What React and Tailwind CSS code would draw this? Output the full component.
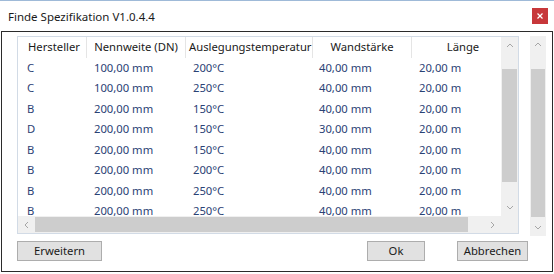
import React from "react";

const rows = [
  ["C", "100,00 mm", "200°C", "40,00 mm", "20,00 m"],
  ["C", "100,00 mm", "250°C", "40,00 mm", "20,00 m"],
  ["B", "200,00 mm", "150°C", "40,00 mm", "20,00 m"],
  ["D", "200,00 mm", "150°C", "30,00 mm", "20,00 m"],
  ["B", "200,00 mm", "150°C", "40,00 mm", "20,00 m"],
  ["B", "200,00 mm", "200°C", "40,00 mm", "20,00 m"],
  ["B", "200,00 mm", "250°C", "40,00 mm", "20,00 m"],
  ["B", "200,00 mm", "250°C", "40,00 mm", "20,00 m"],
];

const colW = ["w-[69px]", "w-[99px]", "w-[127px]", "w-[99px]", "w-[102px]"];
const cellPad = ["pl-[9px]", "pl-[7px]", "pl-[7px]", "pl-[6px]", "pl-[7px]"];

const Chevron = ({ dir }) => {
  const pts = {
    up: "1,5 4,2 7,5",
    down: "1,2 4,5 7,2",
    left: "5,1 2,4 5,7",
    right: "2,1 5,4 2,7",
  }[dir];
  const horiz = dir === "left" || dir === "right";
  return (
    <svg width={horiz ? 7 : 8} height={horiz ? 8 : 7} viewBox={horiz ? "0 0 7 8" : "0 0 8 7"} fill="none" stroke="#a6a6a6" strokeWidth="1">
      <polyline points={pts} />
    </svg>
  );
};

const VScroll = ({ thumbTop, thumbH, className }) => (
  <div className={`flex flex-col bg-[#f0f0f0] ${className}`}>
    <div className="h-[17px] flex items-center justify-center shrink-0"><Chevron dir="up" /></div>
    <div className="flex-1 flex flex-col">
      <div style={{ height: thumbTop }} />
      <div className="mx-[1px] bg-[#cdcdcd]" style={{ height: thumbH }} />
    </div>
    <div className="h-[17px] flex items-center justify-center shrink-0"><Chevron dir="down" /></div>
  </div>
);

export default function App() {
  return (
    <div className="w-[554px] h-[274px] bg-white overflow-hidden border-t border-[#9fbad8] text-[11.25px] text-[#1a1a1a]" style={{ fontFamily: '"Segoe UI", "Noto Sans", sans-serif' }}>
      <div className="h-[30px] flex items-center justify-between pl-[8px] pr-[6px]">
        <span className="mt-[1px] text-[11.5px]">Finde Spezifikation V1.0.4.4</span>
        <div className="w-[16px] h-[16px] bg-[#c7373a] flex items-center justify-center">
          <svg width="6" height="6" viewBox="0 0 6 6" stroke="white" strokeWidth="1.3">
            <line x1="0.5" y1="0.5" x2="5.5" y2="5.5" />
            <line x1="5.5" y1="0.5" x2="0.5" y2="5.5" />
          </svg>
        </div>
      </div>

      <div className="mx-[1px] h-[241px] border border-[#2b2b2b] flex flex-col">
        <div className="flex mt-[4px] pl-[15px]">
          <div className="w-[502px] h-[198px] border border-[#d2dbe6] flex flex-col">
            <div className="flex-1 flex min-h-0">
              <div className="flex-1 overflow-hidden flex flex-col">
                <div className="h-[21px] flex shrink-0">
                  {["Hersteller", "Nennweite (DN)", "Auslegungstemperatur", "Wandstärke", "Länge"].map((h, i) => (
                    <div key={h} className={`${colW[i]} shrink-0 h-full flex items-center overflow-hidden whitespace-nowrap ${i < 4 ? "border-r border-[#e5e5e5]" : ""} ${i === 2 ? "justify-start pl-[3px]" : "justify-center"} ${i === 0 ? "pl-[4px]" : ""}`}>
                      {h}
                    </div>
                  ))}
                </div>
                <div className="flex flex-col">
                  {rows.map((r, ri) => (
                    <div key={ri} className="h-[20.5px] flex shrink-0 text-[#2b4275]">
                      {r.map((c, ci) => (
                        <div key={ci} className={`${colW[ci]} ${cellPad[ci]} shrink-0 flex items-center whitespace-nowrap`}>{c}</div>
                      ))}
                    </div>
                  ))}
                </div>
              </div>
              <VScroll className="w-[17px]" thumbTop={15} thumbH={113} />
            </div>
            <div className="h-[17px] flex shrink-0">
              <div className="flex-1 bg-[#f0f0f0] flex items-center">
                <div className="w-[17px] flex justify-center"><Chevron dir="left" /></div>
                <div className="w-[433px] h-[15px] bg-[#cdcdcd]" />
                <div className="flex-1" />
                <div className="w-[17px] flex justify-center"><Chevron dir="right" /></div>
              </div>
              <div className="w-[17px] bg-[#f0f0f0]" />
            </div>
          </div>
          <VScroll className="w-[16px] h-[200px] ml-[11px]" thumbTop={16} thumbH={148} />
        </div>

        <div className="flex mt-[5px] pl-[15px]">
          <button className="w-[85px] h-[20px] bg-[#e1e1e1] border border-[#adadad] leading-none">Erweitern</button>
          <button className="w-[58px] h-[20px] ml-[265px] bg-[#e1e1e1] border border-[#adadad] leading-none">Ok</button>
          <button className="w-[71px] h-[20px] ml-[32px] bg-[#e1e1e1] border border-[#adadad] leading-none">Abbrechen</button>
        </div>
      </div>
    </div>
  );
}
